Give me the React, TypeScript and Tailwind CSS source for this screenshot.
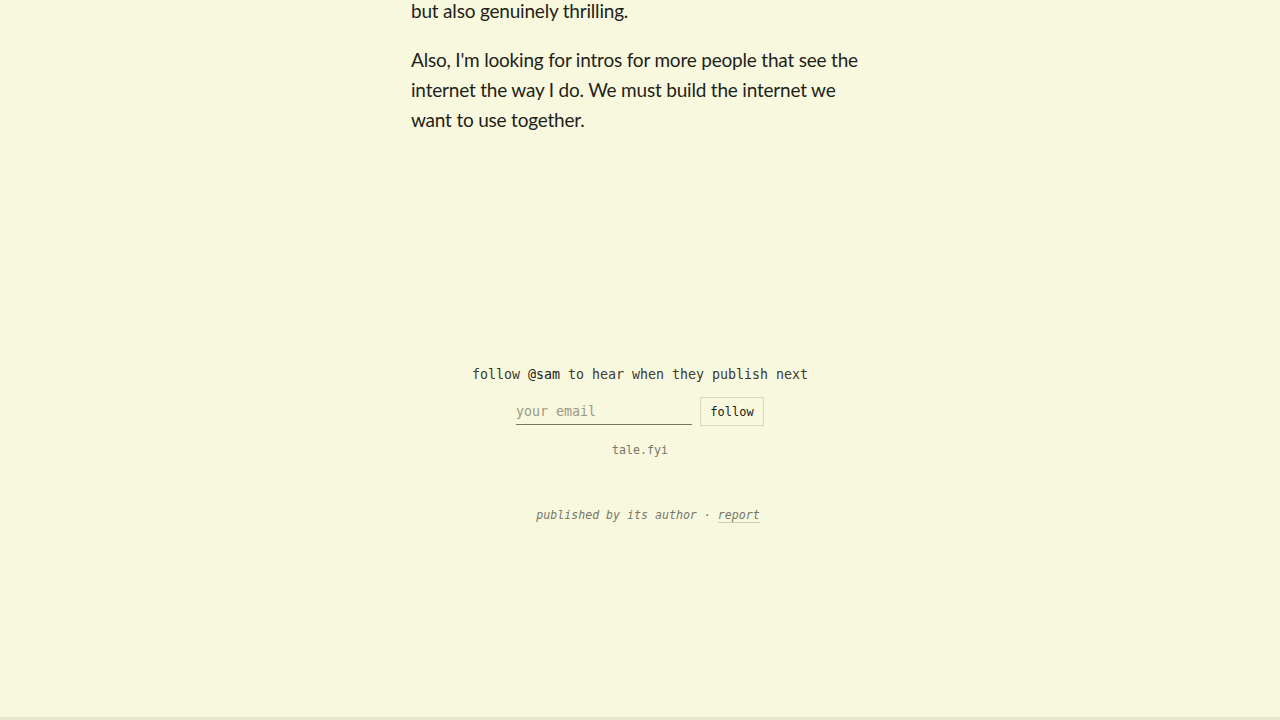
import React from "react";

export default function App() {
  const mono = { fontFamily: '"DejaVu Sans Mono", "Liberation Mono", monospace' };
  return (
    <div className="min-h-[720px] w-full bg-[#f8f8de] text-[#1f1f1a] flex flex-col border-b-[3px] border-[#e6e6c8]">
      <article
        className="mx-auto w-[458px] text-[19px] leading-[30px] tracking-[-0.2px] mt-[-4px]"
        style={{ fontFamily: 'Lato, "Noto Sans", sans-serif' }}
      >
        <p className="mb-[19px]">but also genuinely thrilling.</p>
        <p>
          Also, I'm looking for intros for more people that see the internet the way I do. We must build the
          internet we want to use together.
        </p>
      </article>
      <section className="mt-[230px] flex flex-col items-center" style={mono}>
        <p className="text-[13.3px] leading-[20px] text-[#3a3a33]">
          follow <span className="text-[#1a1a15]">@sam</span> to hear when they publish next
        </p>
        <form className="mt-[12px] flex items-center gap-[8px]" onSubmit={(e) => e.preventDefault()}>
          <input
            placeholder="your email"
            className="w-[176px] h-[26px] bg-transparent border-b border-[#77775a] text-[13.3px] placeholder-[#9a9a80] outline-none"
            style={mono}
          />
          <button
            type="submit"
            className="h-[29px] w-[64px] border border-[#d9d9bd] text-[12px] text-[#1a1a15] bg-transparent"
            style={mono}
          >
            follow
          </button>
        </form>
        <p className="mt-[16px] text-[11.6px] leading-[16px] text-[#77776a]">tale.fyi</p>
        <p className="mt-[49px] text-[11.6px] leading-[16px] italic text-[#77776a] ml-[16px]">
          published by its author ·{" "}
          <a className="border-b border-[#d0d0b0] text-[#77776a]">report</a>
        </p>
      </section>
    </div>
  );
}
